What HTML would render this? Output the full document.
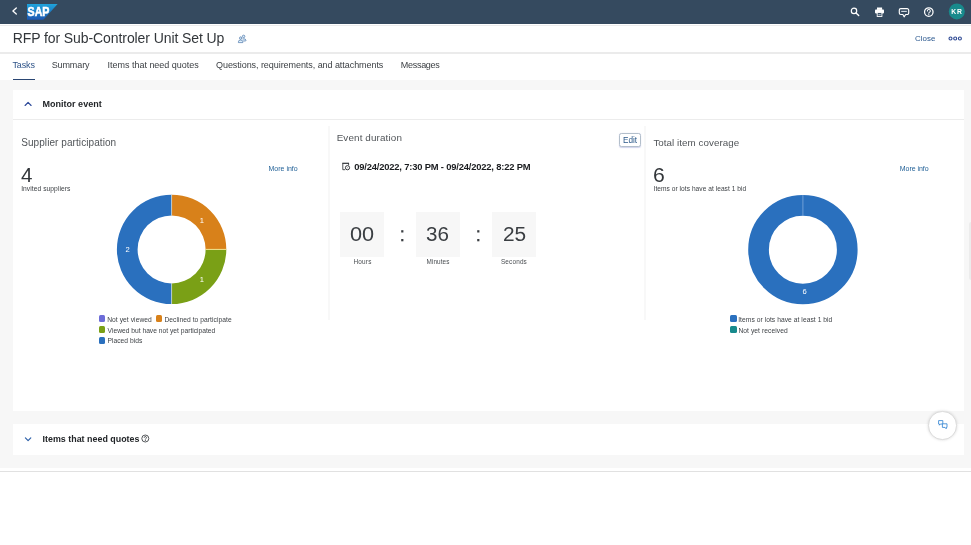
<!DOCTYPE html>
<html lang="en">
<head>
<meta charset="utf-8">
<title>RFP for Sub-Controler Unit Set Up</title>
<style>
*{box-sizing:border-box;margin:0;padding:0}
html,body{width:971px;height:545px;overflow:hidden;background:#fff;font-family:"Liberation Sans",sans-serif;color:#32363a}
.a{position:absolute}
.t{position:absolute;white-space:nowrap;font-family:"Liberation Sans",sans-serif}
#shell{left:0;top:0;width:971px;height:24px;background:#354a5f}
#titlebar{left:0;top:24px;width:971px;height:30px;background:#fff;border-top:1px solid #fff;border-bottom:2px solid #ebebeb}
#tabs{left:0;top:54px;width:971px;height:26px;background:#fff}
#content{left:0;top:80px;width:971px;height:388px;background:#f7f7f7}
.panel{position:absolute;left:13px;width:951px;background:#fff}
.sq{position:absolute;width:6.6px;height:6.6px;border-radius:1.5px}
.tbox{position:absolute;top:211.9px;width:43.6px;height:44.7px;background:#f7f7f7}
svg{position:absolute;left:0;top:0;overflow:visible;will-change:transform}
#tx{position:absolute;left:0;top:0;width:971px;height:545px;will-change:transform}
</style>
</head>
<body>
<div class="a" id="shell"></div>
<div class="a" id="titlebar"></div>
<div class="a" style="left:0;top:25px;width:971px;height:1px;background:#ececec"></div>
<div class="a" id="tabs"></div>
<div class="a" id="content"></div>
<div class="a" style="left:12.9px;top:78.7px;width:21.7px;height:1.4px;background:#2a4673"></div>
<div class="a" style="left:0;top:471px;width:971px;height:1px;background:#e1e1e1"></div>

<!-- panels -->
<div class="panel" style="top:89.5px;height:321.5px"></div>
<div class="a" style="left:13px;top:119px;width:951px;height:1px;background:#ececec"></div>
<div class="panel" style="top:424px;height:31px"></div>
<div class="a" style="left:328px;top:126px;width:2px;height:194px;background:#f8f8f8"></div>
<div class="a" style="left:644px;top:126px;width:2px;height:194px;background:#f8f8f8"></div>
<div class="a" style="left:969px;top:222px;width:2px;height:58px;background:#ececec;border-radius:2px 0 0 2px"></div>

<!-- timer boxes -->
<div class="tbox" style="left:340.3px"></div>
<div class="tbox" style="left:416.2px"></div>
<div class="tbox" style="left:492.3px"></div>

<!-- edit button -->
<div class="a" style="left:619.2px;top:132.5px;width:22px;height:14.5px;border:1px solid #b3bfcb;border-radius:2.5px;background:#fff;box-shadow:0 .5px 1px rgba(120,130,200,.35)"></div>

<!-- legend squares -->
<div class="sq" style="left:98.6px;top:315.2px;background:#6c6cd8"></div>
<div class="sq" style="left:155.9px;top:315.2px;background:#d8811a"></div>
<div class="sq" style="left:98.6px;top:326.4px;background:#7aa016"></div>
<div class="sq" style="left:98.6px;top:337.3px;background:#2a70be"></div>
<div class="sq" style="left:730.1px;top:315.1px;background:#2a70be"></div>
<div class="sq" style="left:730.1px;top:326.2px;background:#178a8c"></div>

<!-- floating button -->
<div class="a" style="left:928.4px;top:411.4px;width:28.4px;height:28.4px;border-radius:50%;background:#fff;border:1px solid #dcdcdc;box-shadow:0 0 3px rgba(0,0,0,.14)"></div>

<svg width="971" height="545" viewBox="0 0 971 545">
  <defs>
    <linearGradient id="sapg" x1="0" y1="0" x2="0" y2="1">
      <stop offset="0" stop-color="#1fa4dc"/>
      <stop offset="1" stop-color="#1b58b3"/>
    </linearGradient>
  </defs>
  <!-- back chevron -->
  <path d="M16.3 7.9 L12.9 11 L16.3 14.1" fill="none" stroke="#fff" stroke-width="1.3" stroke-linecap="round" stroke-linejoin="round"/>
  <!-- SAP logo -->
  <polygon points="27,4 57.6,4 43.4,19.8 27,19.8" fill="url(#sapg)"/>
  <text x="27.6" y="16.3" font-family="Liberation Sans, sans-serif" font-weight="700" font-size="11.9" fill="#fff" stroke="#fff" stroke-width="0.55" textLength="21.8" lengthAdjust="spacingAndGlyphs">SAP</text>

  <!-- search -->
  <circle cx="854" cy="10.9" r="2.7" fill="none" stroke="#fff" stroke-width="1.2"/>
  <path d="M856 13 L858.7 15.6" stroke="#fff" stroke-width="1.4" stroke-linecap="round"/>
  <!-- print -->
  <rect x="877" y="7.5" width="5.1" height="2.4" fill="#fff"/>
  <rect x="875" y="9.5" width="9" height="3.9" rx="0.8" fill="#fff"/>
  <rect x="877.2" y="12.6" width="4.7" height="3.9" fill="#354a5f" stroke="#fff" stroke-width="0.9"/>
  <rect x="878.4" y="14" width="2.3" height="1.3" fill="#9fb0c0"/>
  <!-- chat -->
  <path d="M900.8 8.6h6.4a1.5 1.5 0 0 1 1.5 1.5v2.9a1.5 1.5 0 0 1 -1.5 1.5h-1.5l-1.6 2.3l-1.2 -2.3h-2.1a1.5 1.5 0 0 1 -1.5 -1.5v-2.9a1.5 1.5 0 0 1 1.5 -1.5z" fill="none" stroke="#fff" stroke-width="1.15" stroke-linejoin="round"/>
  <path d="M901.2 11.4h5.6" stroke="#d5dde5" stroke-width="1.1"/>
  <!-- help -->
  <circle cx="928.8" cy="12" r="4.25" fill="none" stroke="#fff" stroke-width="1.25"/>
  <path d="M927.4 10.9a1.45 1.45 0 1 1 2.2 1.25c-.55.35 -.8.6 -.8 1.2" fill="none" stroke="#fff" stroke-width="1.05" stroke-linecap="round"/>
  <circle cx="928.8" cy="14.6" r="0.6" fill="#fff"/>
  <!-- avatar -->
  <circle cx="956.8" cy="11.4" r="8" fill="#188a8c"/>

  <!-- people icon near title -->
  <g fill="#dff0fb" stroke="#2f5f9c" stroke-width="0.6" stroke-linejoin="round">
    <path d="M242.4 38.9 Q246 38.2 246 40.4 Q246 41 245.2 41 H243.2"/>
    <circle cx="243.6" cy="36.4" r="1.25"/>
    <path d="M238.4 42.6 V41.8 Q238.4 40 240.6 40 Q242.8 40 242.8 41.8 V42.6 Z"/>
    <ellipse cx="240.6" cy="38.1" rx="1.05" ry="1.3"/>
  </g>
  <!-- ooo -->
  <g fill="none" stroke="#2f4a94" stroke-width="1.1">
    <circle cx="950.5" cy="38.5" r="1.5"/>
    <circle cx="955.2" cy="38.5" r="1.5"/>
    <circle cx="959.9" cy="38.5" r="1.5"/>
  </g>

  <!-- panel chevrons -->
  <path d="M25.1 105.5 L28.1 102.3 L31.1 105.5" fill="none" stroke="#2f4b9b" stroke-width="1.15" stroke-linecap="round" stroke-linejoin="round"/>
  <path d="M25.4 437.9 L28.1 440.7 L30.8 437.9" fill="none" stroke="#2c5fa8" stroke-width="1.15" stroke-linecap="round" stroke-linejoin="round"/>
  <!-- help icon small -->
  <circle cx="145.3" cy="438.5" r="3.5" fill="none" stroke="#2c3034" stroke-width="0.8"/>
  <path d="M144.2 437.7a1.15 1.15 0 1 1 1.75 .95c-.45.3 -.65.5 -.65.9" fill="none" stroke="#2c3034" stroke-width="0.8"/>
  <circle cx="145.3" cy="440.55" r="0.5" fill="#2c3034"/>

  <!-- calendar icon -->
  <g fill="none" stroke="#2e3236">
    <path d="M342.3 163.3H349" stroke-width="1.2"/>
    <path d="M342.8 163.3V169.7H345.2" stroke-width="0.85"/>
    <path d="M348.6 163.3V165.2" stroke-width="0.85"/>
    <circle cx="347.5" cy="167.7" r="2.1" stroke-width="0.95" fill="#fff"/>
    <circle cx="347.5" cy="167.7" r="0.45" fill="#2e3236" stroke="none"/>
  </g>
  <!-- colons -->
  <g fill="#3a3e42">
    <rect x="401.2" y="230.2" width="2.2" height="2.3"/>
    <rect x="401.2" y="239" width="2.2" height="2.3"/>
    <rect x="477.2" y="230.2" width="2.2" height="2.3"/>
    <rect x="477.2" y="239" width="2.2" height="2.3"/>
  </g>

  <!-- donut 1 : center 171.6,249.4  R 54.7 r 34 -->
  <g transform="translate(171.6 249.4)">
    <path d="M0 -54.7 A54.7 54.7 0 0 1 54.7 0 L34 0 A34 34 0 0 0 0 -34 Z" fill="#d8811a"/>
    <path d="M54.7 0 A54.7 54.7 0 0 1 0 54.7 L0 34 A34 34 0 0 0 34 0 Z" fill="#7aa016"/>
    <path d="M0 54.7 A54.7 54.7 0 0 1 0 -54.7 L0 -34 A34 34 0 0 0 0 34 Z" fill="#2a70be"/>
    <path d="M0 -54.7V-34M0 54.7V34" stroke="#e9efe0" stroke-width="0.6"/>
    <path d="M34 0H54.7" stroke="#f2e48f" stroke-width="1"/>
  </g>
  <!-- donut 2 : center 802.9,249.65 -->
  <g transform="translate(802.9 249.65)">
    <circle cx="0" cy="0" r="44.35" fill="none" stroke="#2a70be" stroke-width="20.7"/>
    <path d="M0 -54.7V-34" stroke="#9dc0e6" stroke-width="0.6"/>
  </g>

  <!-- floating button icon -->
  <g fill="none" stroke="#2a7fd0" stroke-width="0.8" stroke-linejoin="round">
    <path d="M938.6 420.6h4.2v3.4h-2.4l-1 1.2v-1.2h-.8z"/>
    <path d="M942.4 423.8h4.6v3.6h-.8v1.4l-1.2 -1.4h-2.6z" fill="#fff"/>
  </g>
</svg>

<div id="tx">
<div class="t" style="left:951.18px;top:9.24px;font-size:6.8px;line-height:6.8px;font-weight:700;letter-spacing:0.798px;color:#ffffff">KR</div>
<div class="t" style="left:12.69px;top:31.15px;font-size:14.0px;line-height:14.0px;letter-spacing:-0.087px;color:#32363a">RFP for Sub-Controler Unit Set Up</div>
<div class="t" style="left:915.08px;top:35.21px;font-size:7.9px;line-height:7.9px;letter-spacing:0.047px;color:#2b588f">Close</div>
<div class="t" style="left:12.44px;top:61.28px;font-size:9.0px;line-height:9.0px;letter-spacing:-0.130px;color:#2e5388">Tasks</div>
<div class="t" style="left:51.66px;top:61.28px;font-size:9.0px;line-height:9.0px;letter-spacing:-0.102px;color:#3b3f43">Summary</div>
<div class="t" style="left:107.55px;top:61.28px;font-size:9.0px;line-height:9.0px;letter-spacing:-0.017px;color:#3b3f43">Items that need quotes</div>
<div class="t" style="left:216.04px;top:61.28px;font-size:9.0px;line-height:9.0px;letter-spacing:-0.058px;color:#3b3f43">Questions, requirements, and attachments</div>
<div class="t" style="left:400.67px;top:61.28px;font-size:9.0px;line-height:9.0px;letter-spacing:-0.258px;color:#3b3f43">Messages</div>
<div class="t" style="left:42.49px;top:100.48px;font-size:9.0px;line-height:9.0px;font-weight:700;letter-spacing:0.017px;color:#222528">Monitor event</div>
<div class="t" style="left:21.22px;top:137.53px;font-size:10.0px;line-height:10.0px;letter-spacing:0.073px;color:#515559">Supplier participation</div>
<div class="t" style="left:21.35px;top:166.38px;font-size:19.4px;line-height:19.4px;transform:scaleX(1.0622);transform-origin:0 0;color:#32363a">4</div>
<div class="t" style="left:21.13px;top:186.13px;font-size:6.7px;line-height:6.7px;letter-spacing:0.058px;color:#3f4347">Invited suppliers</div>
<div class="t" style="left:268.56px;top:165.07px;font-size:7.0px;line-height:7.0px;letter-spacing:-0.012px;color:#1f5f96">More info</div>
<div class="t" style="left:125.46px;top:245.77px;font-size:7.6px;line-height:7.6px;color:#ffffff">2</div>
<div class="t" style="left:199.68px;top:217.47px;font-size:7.6px;line-height:7.6px;color:#ffffff">1</div>
<div class="t" style="left:199.68px;top:276.37px;font-size:7.6px;line-height:7.6px;color:#ffffff">1</div>
<div class="t" style="left:107.14px;top:317.03px;font-size:6.7px;line-height:6.7px;letter-spacing:0.066px;color:#3f4347">Not yet viewed</div>
<div class="t" style="left:164.41px;top:317.03px;font-size:6.7px;line-height:6.7px;letter-spacing:0.048px;color:#3f4347">Declined to participate</div>
<div class="t" style="left:107.60px;top:327.93px;font-size:6.7px;line-height:6.7px;color:#3f4347">Viewed but have not yet participated</div>
<div class="t" style="left:107.38px;top:337.73px;font-size:6.7px;line-height:6.7px;letter-spacing:0.038px;color:#3f4347">Placed bids</div>
<div class="t" style="left:336.66px;top:132.52px;font-size:9.9px;line-height:9.9px;letter-spacing:0.119px;color:#515559">Event duration</div>
<div class="t" style="left:622.97px;top:136.96px;font-size:8.2px;line-height:8.2px;letter-spacing:0.008px;color:#2d5a8a">Edit</div>
<div class="t" style="left:354.14px;top:162.04px;font-size:9.4px;line-height:9.4px;font-weight:700;letter-spacing:-0.175px;color:#1a1c1f">09/24/2022, 7:30 PM - 09/24/2022, 8:22 PM</div>
<div class="t" style="left:350.38px;top:224.37px;font-size:20.0px;line-height:20.0px;transform:scaleX(1.0844);transform-origin:0 0;color:#3a3e42">00</div>
<div class="t" style="left:426.33px;top:224.37px;font-size:20.0px;line-height:20.0px;transform:scaleX(1.0290);transform-origin:0 0;color:#3a3e42">36</div>
<div class="t" style="left:502.78px;top:224.37px;font-size:20.0px;line-height:20.0px;transform:scaleX(1.0434);transform-origin:0 0;color:#3a3e42">25</div>
<div class="t" style="left:353.42px;top:259.38px;font-size:6.4px;line-height:6.4px;letter-spacing:0.225px;color:#4a4e52">Hours</div>
<div class="t" style="left:426.45px;top:259.38px;font-size:6.4px;line-height:6.4px;letter-spacing:0.105px;color:#4a4e52">Minutes</div>
<div class="t" style="left:500.89px;top:259.38px;font-size:6.4px;line-height:6.4px;letter-spacing:0.179px;color:#4a4e52">Seconds</div>
<div class="t" style="left:653.40px;top:137.70px;font-size:9.8px;line-height:9.8px;letter-spacing:0.044px;color:#515559">Total item coverage</div>
<div class="t" style="left:652.85px;top:165.58px;font-size:19.4px;line-height:19.4px;transform:scaleX(1.0921);transform-origin:0 0;color:#32363a">6</div>
<div class="t" style="left:653.61px;top:186.11px;font-size:6.6px;line-height:6.6px;letter-spacing:0.039px;color:#3f4347">Items or lots have at least 1 bid</div>
<div class="t" style="left:899.80px;top:165.07px;font-size:7.0px;line-height:7.0px;letter-spacing:-0.039px;color:#1f5f96">More info</div>
<div class="t" style="left:802.53px;top:288.37px;font-size:7.6px;line-height:7.6px;color:#ffffff">6</div>
<div class="t" style="left:738.18px;top:316.93px;font-size:6.7px;line-height:6.7px;letter-spacing:0.050px;color:#3f4347">Items or lots have at least 1 bid</div>
<div class="t" style="left:738.38px;top:328.03px;font-size:6.7px;line-height:6.7px;letter-spacing:0.066px;color:#3f4347">Not yet received</div>
<div class="t" style="left:42.55px;top:435.47px;font-size:8.9px;line-height:8.9px;font-weight:700;letter-spacing:0.011px;color:#222528">Items that need quotes</div>
</div>
</body>
</html>
